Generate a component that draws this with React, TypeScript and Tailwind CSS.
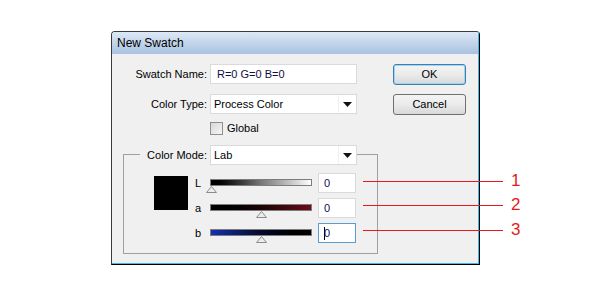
import React from "react";

const font = { fontFamily: '"Liberation Sans", Arial, sans-serif' };

function Caret() {
  return (
    <svg width="9" height="5" viewBox="0 0 9 5">
      <polygon points="0,0 9,0 4.5,5" fill="#111" />
    </svg>
  );
}

function Dropdown({ value, flush }: { value: string; flush?: boolean }) {
  return (
    <div
      className={`flex h-[20px] w-[147px] items-center border border-[#dadada] bg-white ${
        flush ? "" : "ml-[3px]"
      }`}
    >
      <span className="flex-1 pl-[3px] text-[11px] text-black">{value}</span>
      <span className="flex h-full w-[18px] items-center justify-center border-l border-[#f0f0f0]">
        <Caret />
      </span>
    </div>
  );
}

function Thumb() {
  return (
    <svg width="11" height="7" viewBox="0 0 11 7">
      <polygon points="5.5,0.5 10.5,6.5 0.5,6.5" fill="#ececec" stroke="#8c8c8c" />
    </svg>
  );
}

type Row = { label: string; bar: string; thumb: number; focused?: boolean };

const rows: Row[] = [
  { label: "L", bar: "bg-gradient-to-r from-[#000] via-[#777] to-[#fff]", thumb: -4 },
  { label: "a", bar: "bg-gradient-to-r from-[#000] via-[#1c0306] to-[#6e0a16]", thumb: 46 },
  { label: "b", bar: "bg-gradient-to-r from-[#1430b4] via-[#050a2a] to-[#000]", thumb: 46, focused: true },
];

function SliderRow({ row, first }: { row: Row; first: boolean }) {
  return (
    <div className={`flex h-[20px] items-start ${first ? "" : "mt-[5px]"}`}>
      <span className="w-[15px] pt-[2px] text-[11px] text-black">{row.label}</span>
      <div className="relative h-[20px] w-[102px]">
        <div className={`mt-[6px] h-[7px] w-full border border-[#7c7c7c] ${row.bar}`} />
        <div className="absolute top-[13px]" style={{ left: row.thumb }}>
          <Thumb />
        </div>
      </div>
      <div
        className={`ml-[6px] flex h-[20px] w-[38px] items-center border bg-white pl-[5px] text-[11px] text-[#101050] ${
          row.focused ? "border-[#5b9bd0]" : "border-[#dadada]"
        }`}
      >
        {row.focused && <span className="mr-[-1px] h-[13px] w-px bg-black" />}
        0
      </div>
    </div>
  );
}

function Button({ label, focused }: { label: string; focused?: boolean }) {
  return (
    <div
      className={`flex h-[21px] w-[73px] items-center justify-center rounded-[3px] border bg-gradient-to-b from-[#f4f4f4] via-[#ebebeb] to-[#d8d8d8] text-[11px] text-black ${
        focused ? "border-[#3c7fb1] shadow-[inset_0_0_0_1px_#9fd4f4]" : "border-[#707070]"
      }`}
    >
      {label}
    </div>
  );
}

export default function App() {
  return (
    <div className="relative h-[300px] w-[600px] bg-white pl-[111px] pt-[31px]" style={font}>
      <div className="h-[234px] w-[369px] rounded-t-[4px] border border-l-[#3a3a3a] border-t-[#3a3a3a] border-r-black border-b-black">
        <div className="flex h-full flex-col border-b border-r border-[#3cb8ea]">
          <div className="flex h-[22px] items-center rounded-t-[3px] bg-gradient-to-b from-[#dde8f5] to-[#a9c2e0] pl-[5px] text-[12px] text-black">
            New Swatch
          </div>
          <div className="flex flex-1 bg-[#f0f0f0]">
            <div className="w-[281px] pt-[10px]">
              <div className="flex h-[20px] items-center">
                <span className="w-[95px] text-right text-[11px] text-black">Swatch Name:</span>
                <div className="ml-[3px] flex h-[20px] w-[147px] items-center border border-[#dadada] bg-white pl-[6px] text-[11px] text-[#101040]">
                  R=0 G=0 B=0
                </div>
              </div>
              <div className="mt-[10px] flex h-[20px] items-center">
                <span className="w-[95px] text-right text-[11px] text-black">Color Type:</span>
                <Dropdown value="Process Color" />
              </div>
              <div className="mt-[8px] flex h-[13px] items-center pl-[98px]">
                <span className="h-[13px] w-[13px] border border-[#8e8f8f] bg-gradient-to-br from-[#d8d8d8] to-[#f6f6f6]" />
                <span className="ml-[4px] text-[11px] leading-[13px] text-black">Global</span>
              </div>
              <div className="ml-[11px] mt-[19px] w-[255px] border border-[#a0a0a0] pb-[10px]">
                <div className="-mt-[10px] ml-[16px] flex h-[20px] items-center">
                  <span className="w-[70px] whitespace-nowrap bg-[#f0f0f0] pr-[3px] text-right text-[11px] text-black">
                    Color Mode:
                  </span>
                  <Dropdown value="Lab" flush />
                </div>
                <div className="mt-[8px] flex pl-[30px]">
                  <div className="mt-[3px] h-[34px] w-[34px] bg-black" />
                  <div className="ml-[7px]">
                    {rows.map((r, i) => (
                      <SliderRow key={r.label} row={r} first={i === 0} />
                    ))}
                  </div>
                </div>
              </div>
            </div>
            <div className="pt-[10px]">
              <Button label="OK" focused />
              <div className="mt-[9px]">
                <Button label="Cancel" />
              </div>
            </div>
          </div>
        </div>
      </div>

      {[181, 205, 230].map((y, i) => (
        <React.Fragment key={y}>
          <div className="absolute left-[363px] h-px w-[140px] bg-[#e31b1b]" style={{ top: y }} />
          <span
            className="absolute left-[511px] text-[17px] leading-[20px] text-[#e31b1b]"
            style={{ top: y - 10 }}
          >
            {i + 1}
          </span>
        </React.Fragment>
      ))}
    </div>
  );
}
